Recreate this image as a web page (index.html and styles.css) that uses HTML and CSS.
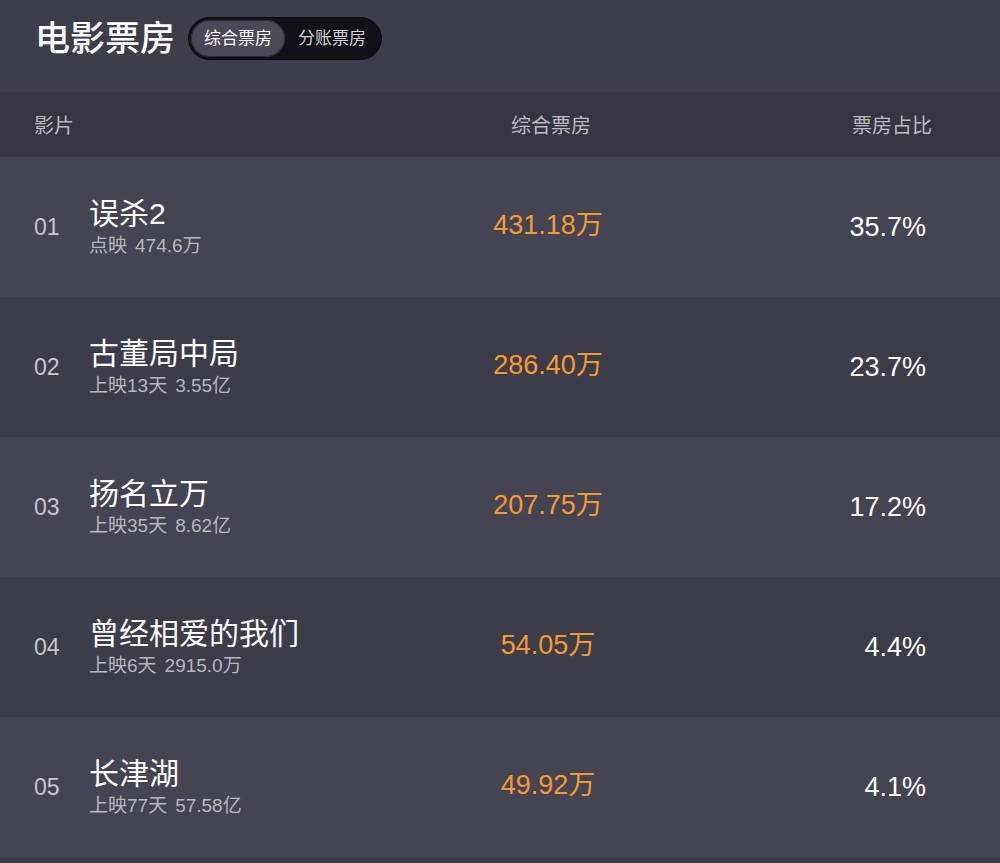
FILE: index.html
```html
<!DOCTYPE html>
<html lang="zh-CN">
<head>
  <meta charset="UTF-8">
  <meta name="viewport" content="width=device-width, initial-scale=1.0">
  <title>电影票房</title>
  <link rel="stylesheet" href="styles.css">
</head>
<body>

  <header class="top">
    <h1>电影票房</h1>
    <div class="switch">
      <span class="tab active">综合票房</span>
      <span class="tab">分账票房</span>
    </div>
  </header>

  <div class="thead">
    <span class="col-film">影片</span>
    <span class="col-box">综合票房</span>
    <span class="col-rate">票房占比</span>
  </div>

  <div class="row">
    <span class="rank">01</span>
    <div class="film">
      <div class="name">误杀2</div>
      <div class="sub">点映<span class="total">474.6万</span></div>
    </div>
    <span class="box">431.18万</span>
    <span class="rate">35.7%</span>
  </div>

  <div class="row">
    <span class="rank">02</span>
    <div class="film">
      <div class="name">古董局中局</div>
      <div class="sub">上映13天<span class="total">3.55亿</span></div>
    </div>
    <span class="box">286.40万</span>
    <span class="rate">23.7%</span>
  </div>

  <div class="row">
    <span class="rank">03</span>
    <div class="film">
      <div class="name">扬名立万</div>
      <div class="sub">上映35天<span class="total">8.62亿</span></div>
    </div>
    <span class="box">207.75万</span>
    <span class="rate">17.2%</span>
  </div>

  <div class="row">
    <span class="rank">04</span>
    <div class="film">
      <div class="name">曾经相爱的我们</div>
      <div class="sub">上映6天<span class="total">2915.0万</span></div>
    </div>
    <span class="box">54.05万</span>
    <span class="rate">4.4%</span>
  </div>

  <div class="row">
    <span class="rank">05</span>
    <div class="film">
      <div class="name">长津湖</div>
      <div class="sub">上映77天<span class="total">57.58亿</span></div>
    </div>
    <span class="box">49.92万</span>
    <span class="rate">4.1%</span>
  </div>

</body>
</html>
```

FILE: styles.css
```css
body {
  margin: 0;
  background-color: #3c3b48;
  font-family: "Liberation Sans", "Noto Sans CJK SC", sans-serif;
  color: #fff;
}

.top {
  display: flex;
  align-items: center;
  height: 43px;
  padding: 17px 0 32px 35px;
  background-color: #3e3d4b;
}

.top h1 {
  margin: 0 13px 0 0;
  font-size: 35px;
  font-weight: 500;
  line-height: 43px;
}

.switch {
  display: flex;
  align-items: center;
  padding: 2px;
  background-color: #121117;
  border: 1px solid #0a0a0d;
  border-radius: 22px;
}

.tab {
  padding: 0 13px;
  font-size: 17px;
  line-height: 37px;
  color: #cfcfd3;
  border-radius: 19px;
}

.tab.active {
  background-color: #4b4956;
  color: #fff;
  box-shadow: inset 0 0 0 1px #2a2932;
}

.thead,
.row {
  display: grid;
  grid-template-columns: 55px 360px 198px 1fr;
  align-items: center;
  padding: 0 74px 0 34px;
}

.thead {
  height: 65px;
  background-color: #363541;
  font-size: 20px;
  color: #b9b9be;
}

.thead .col-film {
  grid-column: 1 / 3;
}

.thead .col-box {
  text-align: center;
  padding-left: 6px;
}

.thead .col-rate {
  text-align: right;
  margin-right: -6px;
}

.row {
  height: 140px;
  background-color: #454452;
}

.row:nth-child(even) {
  background-color: #3d3c49;
}

.rank {
  font-size: 23px;
  color: #c6c6cb;
}

.name {
  font-size: 30px;
  line-height: 34px;
}

.sub {
  margin-top: 4px;
  font-size: 19px;
  line-height: 22px;
  color: #b6b6bb;
}

.sub .total {
  margin-left: 8px;
}

.box {
  text-align: center;
  font-size: 27px;
  line-height: 30px;
  margin-top: -4px;
  color: #f29a32;
}

.rate {
  text-align: right;
  font-size: 27px;
  line-height: 30px;
}
```
